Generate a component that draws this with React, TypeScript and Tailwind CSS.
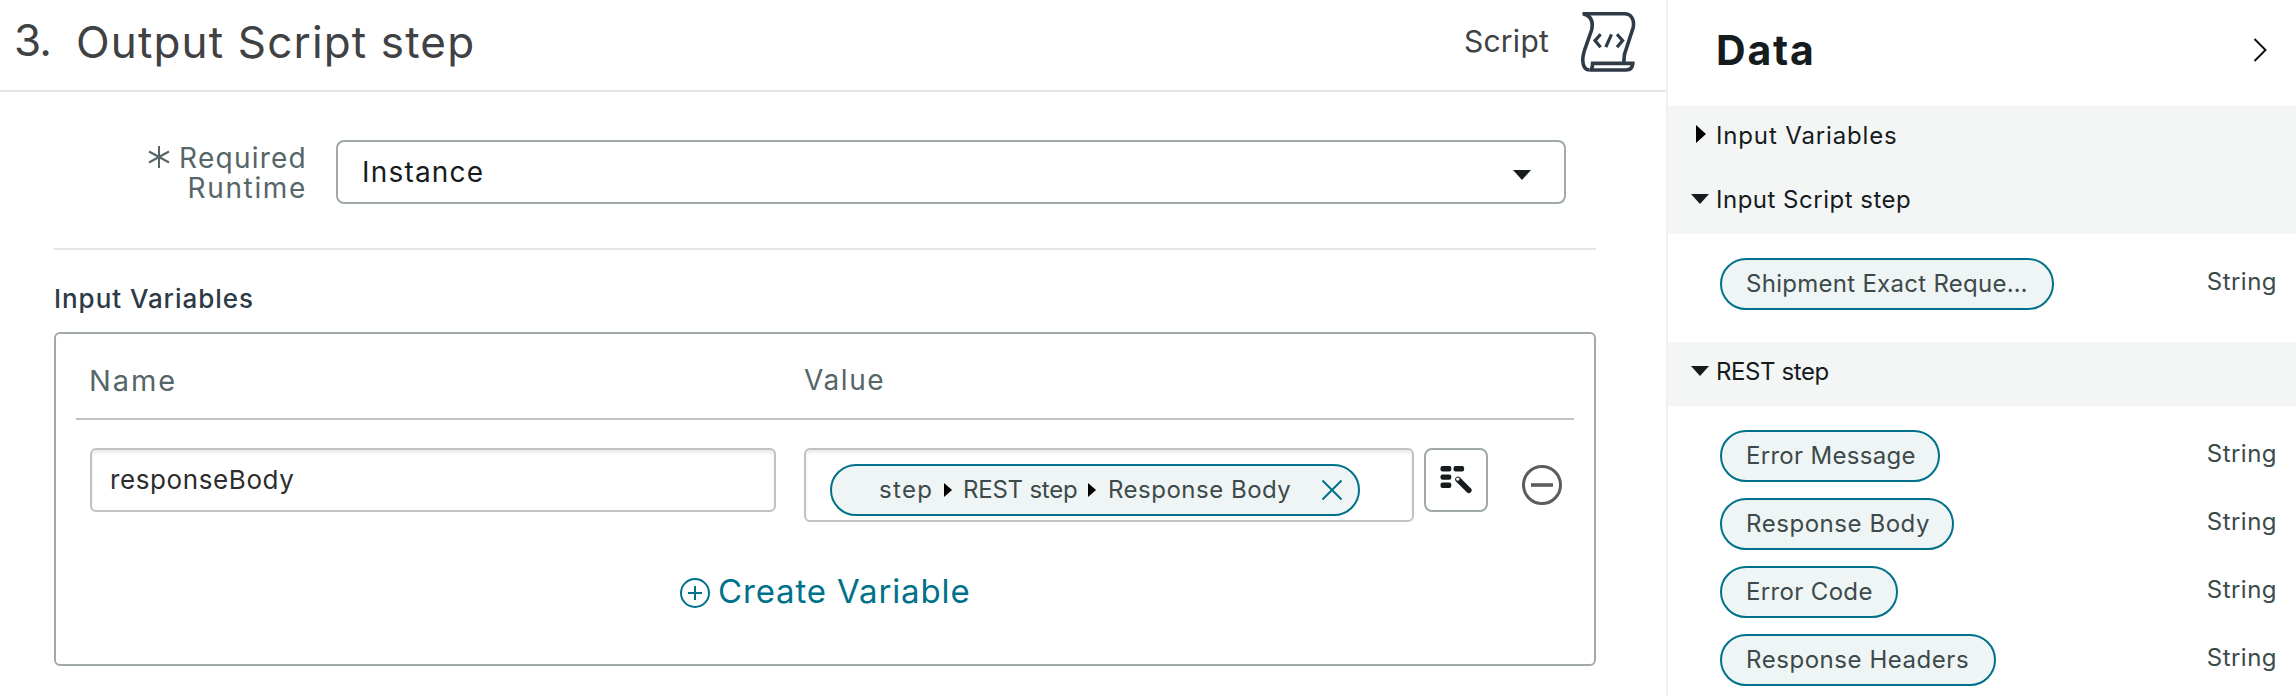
import React from 'react';

type Variable = { label: string; type: string; tracking: string; width: string };

const shipment: Variable[] = [
  { label: 'Shipment Exact Reque…', type: 'String', tracking: 'tracking-[0.28px]', width: 'w-[334px]' },
];

const rest: Variable[] = [
  { label: 'Error Message', type: 'String', tracking: 'tracking-[0.3px]', width: 'w-[220px]' },
  { label: 'Response Body', type: 'String', tracking: 'tracking-[0.55px]', width: 'w-[234px]' },
  { label: 'Error Code', type: 'String', tracking: 'tracking-[0.35px]', width: 'w-[178px]' },
  { label: 'Response Headers', type: 'String', tracking: 'tracking-[0.55px]', width: 'w-[276px]' },
];

function ScriptIcon() {
  return (
    <svg className="h-[90px] w-[100px]" viewBox="0 0 100 90" fill="none" stroke="#2e3a46" strokeWidth="3.6">
      <path d="M22.5 13.8H64.5C71.5 13.8 74.6 20 73.2 27.5L64.4 54.5L63.8 62" />
      <path d="M23.5 14C31.5 16 33.4 22 31.6 30L24.6 50C21 61 23 70 29.5 70" />
      <path d="M29.5 70H66C70.5 70 72.6 67.5 72.8 63.4H32.6C32.6 67 31.5 70 29.5 70Z" />
      <path d="M40.6 34.3L35 40.6L40.6 47.2M57 34.3L62.6 40.6L57 47.2M51.5 34.3L45.8 47.2" strokeWidth="3.2" />
    </svg>
  );
}

function RightCaret({ className }: { className: string }) {
  return (
    <svg className={className} viewBox="0 0 10 18" preserveAspectRatio="none" fill="#000">
      <path d="M0 0L10 9L0 18Z" />
    </svg>
  );
}

function DownCaret({ className }: { className: string }) {
  return (
    <svg className={className} viewBox="0 0 18 10" fill="#161b1d">
      <path d="M0 0H18L9 10Z" />
    </svg>
  );
}

function VariableRow({ item }: { item: Variable }) {
  return (
    <div className="flex h-[52px] items-start justify-between pr-[19px] pl-[52px]">
      <div
        className={`flex h-[52px] items-center rounded-full border-2 border-[#00718a] bg-[#eff5f5] pl-[24px] text-2xl whitespace-nowrap text-[#3c4a4b] ${item.width} ${item.tracking}`}
      >
        {item.label}
      </div>
      <span className="text-2xl leading-[47px] tracking-[0.47px] text-[#3c4a4b]">{item.type}</span>
    </div>
  );
}

function SectionHeader({ label, tracking, open }: { label: string; tracking: string; open: boolean }) {
  return (
    <div className="flex h-16 items-start bg-[#f4f6f6] text-2xl text-[#161b1d]">
      <div className="flex w-[48px] justify-end">
        {open ? (
          <DownCaret className="mt-[24px] mr-[7px] h-[10px] w-[18px]" />
        ) : (
          <RightCaret className="mt-[19px] mr-[10px] h-[18px] w-[10px]" />
        )}
      </div>
      <span className={`leading-[60px] ${tracking}`}>{label}</span>
    </div>
  );
}

function DataPanel() {
  return (
    <aside className="flex w-[630px] shrink-0 flex-col border-l-2 border-[#eef0f1] bg-white">
      <div className="flex h-[106px] items-start justify-between pr-[29px] pl-[48px]">
        <h2 className="text-[41px] leading-[100px] font-bold tracking-[1.8px] text-[#161b1d]">Data</h2>
        <svg className="mt-[38px] h-6 w-[14px]" viewBox="0 0 14 24" fill="none" stroke="#111" strokeWidth="2">
          <path d="M1.5 1L12.5 12L1.5 23" />
        </svg>
      </div>
      <SectionHeader label="Input Variables" tracking="tracking-[0.85px]" open={false} />
      <SectionHeader label="Input Script step" tracking="tracking-[0.5px]" open />
      <div className="flex h-[108px] flex-col pt-6">
        {shipment.map((item) => (
          <VariableRow key={item.label} item={item} />
        ))}
      </div>
      <SectionHeader label="REST step" tracking="tracking-[-0.4px]" open />
      <div className="flex flex-col gap-4 pt-6">
        {rest.map((item) => (
          <VariableRow key={item.label} item={item} />
        ))}
      </div>
    </aside>
  );
}

function ValuePill() {
  return (
    <div className="flex h-[52px] w-[530px] items-center rounded-full border-2 border-[#00718a] bg-[#eff5f5] pl-[47px] text-2xl whitespace-nowrap text-[#3c4a4b]">
      <span className="w-[65px] tracking-[1.3px]">step</span>
      <RightCaret className="h-[14px] w-[8px]" />
      <span className="ml-[11px] w-[125px] tracking-[-0.22px]">REST step</span>
      <RightCaret className="h-[14px] w-[8px]" />
      <span className="ml-[12px] w-[214px] tracking-[0.5px]">Response Body</span>
      <svg className="h-5 w-5" viewBox="0 0 20 20" fill="none" stroke="#00718a" strokeWidth="2">
        <path d="M0.5 0.5L19.5 19.5M19.5 0.5L0.5 19.5" />
      </svg>
    </div>
  );
}

function VariablesTable() {
  return (
    <div className="flex h-[334px] w-[1542px] flex-col rounded-md border-2 border-[#a0aaac] px-5">
      <div className="flex h-[86px] border-b-2 border-[#c2c2c2] pl-[13px] text-[28px] leading-[93px] text-[#566668]">
        <span className="w-[715px] text-[29px] tracking-[1.9px]">Name</span>
        <span className="tracking-[1.6px]">Value</span>
      </div>
      <div className="flex h-[102px] items-start pt-7 pl-[14px]">
        <div className="flex h-16 w-[686px] items-start rounded-md border-2 border-[#c2c2c2] pl-[18px] text-[26px] leading-[59px] tracking-[0.6px] text-[#2b2d2e] shadow-[inset_0_3px_3px_rgba(0,0,0,0.08)]">
          responseBody
        </div>
        <div className="ml-7 h-[74px] w-[610px] rounded-md border-2 border-[#c2c2c2] pt-[14px] pl-[24px] shadow-[inset_0_3px_3px_rgba(0,0,0,0.08)]">
          <ValuePill />
        </div>
        <div className="ml-[10px] h-16 w-16 rounded-lg border-2 border-[#a0aaac]">
          <svg className="h-[60px] w-[60px]" viewBox="0 0 60 60" fill="#161b1d">
            <rect x="14.5" y="16" width="10.8" height="5.4" rx="2" />
            <rect x="27.5" y="16" width="10.6" height="5.4" rx="2" />
            <rect x="14.5" y="24.4" width="10.8" height="5.4" rx="2" />
            <rect x="14.5" y="32.6" width="10.8" height="5.4" rx="2" />
            <path d="M32 29.5L42.8 40.3" stroke="#161b1d" strokeWidth="5.6" strokeLinecap="round" />
            <circle cx="31.8" cy="29.1" r="1.7" fill="#fff" />
          </svg>
        </div>
        <svg className="mt-[16px] ml-[33px] h-[42px] w-[42px]" viewBox="0 0 42 42" fill="none" stroke="#5b5c5d">
          <circle cx="21" cy="21" r="18.5" strokeWidth="3" />
          <path d="M10 21H32" strokeWidth="3.6" />
        </svg>
      </div>
      <div className="flex items-start pt-[42px] pl-[604px] text-[#00718a]">
        <svg className="mt-[14px] h-[30px] w-[30px]" viewBox="0 0 30 30" fill="none" stroke="#00718a" strokeWidth="2">
          <circle cx="15" cy="15" r="14" />
          <path d="M8 15H22M15 8V22" />
        </svg>
        <span className="ml-[8px] text-[33px] leading-[54px] tracking-[0.86px]">Create Variable</span>
      </div>
    </div>
  );
}

function StepForm() {
  return (
    <main className="flex w-[1666px] shrink-0 flex-col">
      <header className="flex h-[92px] items-start border-b-2 border-[#e1e5e8] pl-[14px] text-[#404143]">
        <span className="w-[62px] text-[44px] leading-[80px] tracking-[-1px]">3.</span>
        <h1 className="w-[1388px] text-[44px] leading-[84px] tracking-[1.15px]">Output Script step</h1>
        <span className="w-[96px] text-[30px] leading-[82px] tracking-[0.24px]">Script</span>
        <ScriptIcon />
      </header>
      <section className="mx-[54px] flex h-[158px] w-[1542px] items-start border-b-2 border-[#e1e5e8] pt-12">
        <div className="flex w-[253px] items-start justify-end pt-[3px] text-[28px] leading-[30px] text-[#566668]">
          <svg className="mt-[3px] mr-[9px] h-[22px] w-[22px]" viewBox="0 0 22 22" stroke="#566668" strokeWidth="2">
            <path d="M11 0V22M1 5.5L21 16.5M21 5.5L1 16.5" />
          </svg>
          <div className="flex flex-col items-end">
            <span className="tracking-[1.24px]">Required</span>
            <span className="tracking-[1.65px]">Runtime</span>
          </div>
        </div>
        <div className="ml-[29px] flex h-16 w-[1230px] items-start justify-between rounded-lg border-2 border-[#a0aaac] pr-[33px] pl-[24px] text-[28px] leading-[60px] tracking-[1.2px] text-[#161b1d]">
          Instance
          <DownCaret className="mt-[28px] h-[10px] w-[18px]" />
        </div>
      </section>
      <section className="flex flex-col pl-[54px]">
        <h3 className="h-[82px] text-[26px] leading-[97px] font-medium tracking-[0.95px] text-[#2e3a46]">
          Input Variables
        </h3>
        <VariablesTable />
      </section>
    </main>
  );
}

export default function App() {
  return (
    <div className="flex h-[696px] w-[2296px] overflow-hidden bg-white font-['Inter','Liberation_Sans',sans-serif]">
      <StepForm />
      <DataPanel />
    </div>
  );
}
